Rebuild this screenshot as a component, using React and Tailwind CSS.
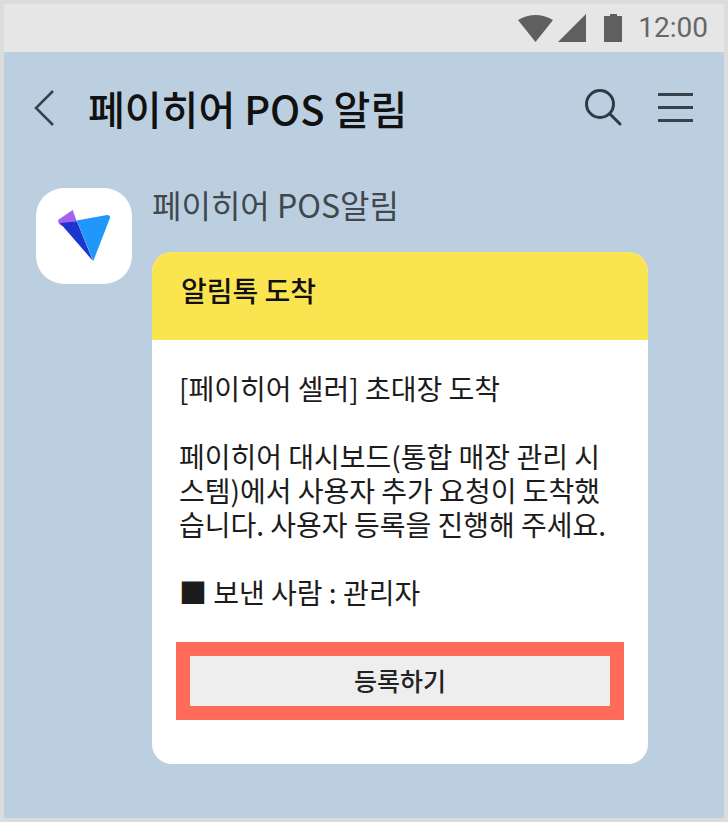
function StatusIcons() {
  return (
    <div className="flex items-center text-[#5f5f5f]">
      <svg width="36" height="28" viewBox="0 0 36 28">
        <path d="M0 6 Q17.500 -4 35 6 L17.500 28 Z" fill="currentColor" />
      </svg>
      <svg width="28" height="28" viewBox="0 0 28 28" className="ml-1">
        <path d="M28 0 V28 H0 Z" fill="currentColor" />
      </svg>
      <svg width="18" height="28" viewBox="0 0 18 28" className="ml-[18px]">
        <path d="M0 2 H6 V0 H13 V2 H18 V28 H0 Z" fill="currentColor" />
      </svg>
    </div>
  )
}

function Logo() {
  return (
    <svg width="96" height="96" viewBox="0 0 96 96">
      <path d="M22 32 L36.700 22 L41 34 L26 38 Q22 36 22 32 Z" fill="#a463ee" />
      <path d="M24 35 L41 33.500 L57 73 Z" fill="#1a36cf" />
      <path d="M40.700 32.500 L71 27 Q74.500 27 74 30 L57.300 73 Z" fill="#2196fb" />
    </svg>
  )
}

export default function App() {
  return (
    <div className="w-[728px] h-[822px] border-4 border-[#dcdcdc] bg-[#bccfe0] font-['Noto_Sans_CJK_KR',sans-serif] overflow-hidden">
      {/* Status bar */}
      <div className="h-12 bg-[#e6e6e6] flex items-center justify-end pr-4">
        <StatusIcons />
        <span className="ml-4 text-[28px] leading-none text-[#666] font-['Roboto',sans-serif]">12:00</span>
      </div>

      {/* Header */}
      <div className="h-[112px] flex items-center pl-[29px] pr-[31px]">
        <svg width="22" height="38" viewBox="0 0 22 38" fill="none" stroke="#36434e" strokeWidth="2.500">
          <path d="M20 2 L3 19 L20 36" />
        </svg>
        <h1 className="ml-[33px] text-[40px] font-medium leading-none text-[#111]">페이히어 POS 알림</h1>
        <div className="ml-auto flex items-center gap-[36px]">
          <svg width="38" height="40" viewBox="0 0 38 40" fill="none" stroke="#2e3a44" strokeWidth="3" className="-mt-[3px]">
            <circle cx="16" cy="17" r="13.500" />
            <path d="M26 27 L36 37" strokeLinecap="round" />
          </svg>
          <div className="w-[35px] flex flex-col gap-[10px] -mt-[2px]">
            <div className="h-[3px] bg-[#36434e]" />
            <div className="h-[3px] bg-[#36434e]" />
            <div className="h-[3px] bg-[#36434e]" />
          </div>
        </div>
      </div>

      {/* Message */}
      <div className="flex items-start pl-[32px] pt-[24px] gap-[20px]">
        <div className="w-[96px] h-[96px] rounded-[28px] bg-white shrink-0 overflow-hidden">
          <Logo />
        </div>
        <div className="w-[496px]">
          <div className="h-[64px] -mt-[2px] mb-[2px] text-[32px] leading-[36px] text-[#40474d]">페이히어 POS알림</div>
          <div className="rounded-[20px] bg-white overflow-hidden h-[512px]">
            <div className="h-[88px] bg-[#fae44f] flex items-center pl-[29px] pb-[12px] text-[28px] font-medium text-[#111]">알림톡 도착</div>
            <div className="pt-[31px] px-[24px]">
              <p className="pl-[5px] text-[28px] leading-[34px] text-[#1c1c1c] whitespace-nowrap -ml-[2px]">
                [페이히어 셀러] 초대장 도착
                <br /><br />
                페이히어 대시보드(통합 매장 관리 시
                <br />
                스템)에서 사용자 추가 요청이 도착했
                <br />
                습니다. 사용자 등록을 진행해 주세요.
                <br /><br />
                ■ 보낸 사람 : 관리자
              </p>
              <button className="mt-[33px] w-full h-[78px] border-[14px] border-[#ff6b5a] bg-[#eeeeee] text-[25px] font-medium text-[#222] flex items-center justify-center">등록하기</button>
            </div>
          </div>
        </div>
      </div>
    </div>
  )
}
